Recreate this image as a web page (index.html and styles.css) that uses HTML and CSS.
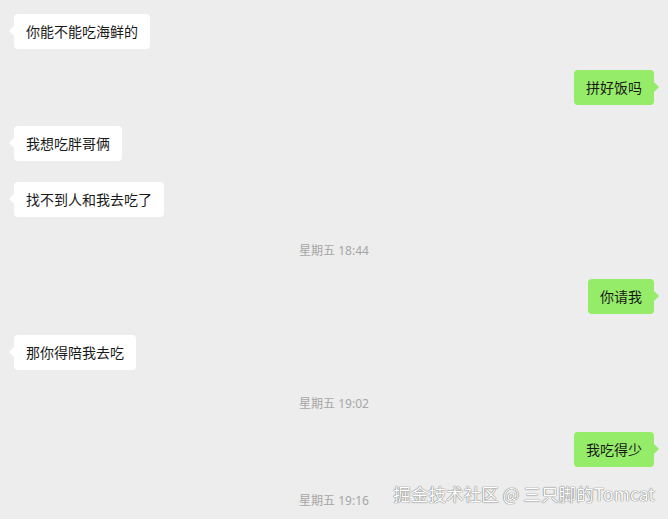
FILE: index.html
```html
<!DOCTYPE html>
<html lang="zh">
<head>
<meta charset="utf-8">
<link rel="stylesheet" href="styles.css">
</head>
<body>
<div class="chat">
  <div class="row left"><div class="bubble">你能不能吃海鲜的</div></div>
  <div class="row right"><div class="bubble">拼好饭吗</div></div>
  <div class="row left"><div class="bubble">我想吃胖哥俩</div></div>
  <div class="row left"><div class="bubble">找不到人和我去吃了</div></div>
  <div class="time">星期五 18:44</div>
  <div class="row right"><div class="bubble">你请我</div></div>
  <div class="row left"><div class="bubble">那你得陪我去吃</div></div>
  <div class="time">星期五 19:02</div>
  <div class="row right"><div class="bubble">我吃得少</div></div>
  <div class="time">星期五 19:16</div>
</div>
<div class="watermark">掘金技术社区 @ 三只脚的Tomcat</div>
</body>
</html>
```
FILE: styles.css
```css
html, body {
  margin: 0;
  padding: 0;
  background: #ededed;
  width: 668px;
  height: 519px;
  overflow: hidden;
  font-family: "Noto Sans CJK SC", "Liberation Sans", sans-serif;
}
.chat {
  display: flex;
  flex-direction: column;
  gap: 21px;
  padding: 14px 14px 0 14px;
}
.row {
  display: flex;
}
.row.left { justify-content: flex-start; }
.row.right { justify-content: flex-end; }
.bubble {
  position: relative;
  background: #fff;
  color: #191919;
  font-size: 14px;
  line-height: 19px;
  padding: 8px 12px;
  border-radius: 4px;
  white-space: nowrap;
}
.right .bubble {
  background: #95ec69;
}
.bubble::before {
  content: "";
  position: absolute;
  top: 12px;
  width: 0;
  height: 0;
  border-top: 5px solid transparent;
  border-bottom: 5px solid transparent;
}
.left .bubble::before {
  left: -5px;
  border-right: 5px solid #fff;
}
.right .bubble::before {
  right: -5px;
  border-left: 5px solid #95ec69;
}
.time {
  margin-top: 4px;
  padding-top: 1px;
  height: 15px;
  line-height: 16px;
  font-family: "Noto Sans", "Noto Sans CJK SC", sans-serif;
  font-size: 12px;
  color: #a6a6a6;
  text-align: center;
}
.watermark {
  position: absolute;
  right: 13px;
  top: 481px;
  font-size: 17.6px;
  line-height: 26px;
  color: #fff;
  text-shadow: 0 0 1px #666, 0 0 1px #666;
  white-space: nowrap;
}
```
